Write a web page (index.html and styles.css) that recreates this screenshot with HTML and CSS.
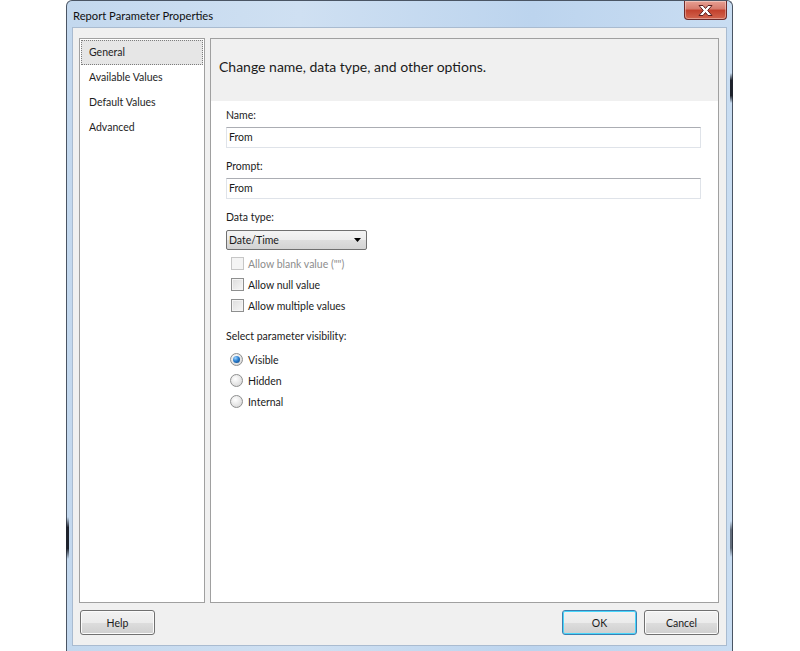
FILE: index.html
```html
<!DOCTYPE html>
<html lang="en">
<head>
<meta charset="utf-8">
<title>Report Parameter Properties</title>
<link rel="stylesheet" href="styles.css">
</head>
<body>
<div class="desk">
  <div class="window">
    <span class="edge edge-l1"></span>
    <span class="edge edge-r1"></span>
    <span class="edge edge-r2"></span>
    <div class="titlebar">
      <span class="title">Report Parameter Properties</span>
      <div class="close">
        <svg width="17" height="11" viewBox="0 0 17 11">
          <path d="M2 0.5 H6 L8.5 3.5 L11 0.5 H15 L10.7 5.5 L15 10.5 H11 L8.5 7.5 L6 10.5 H2 L6.3 5.5 Z" fill="#ffffff" stroke="#5b1f1f" stroke-width="1" stroke-linejoin="round"/>
        </svg>
      </div>
    </div>
    <div class="client">
      <div class="main">
        <ul class="nav">
          <li class="nav-item selected">General</li>
          <li class="nav-item">Available Values</li>
          <li class="nav-item">Default Values</li>
          <li class="nav-item">Advanced</li>
        </ul>
        <div class="page">
          <div class="page-head">Change name, data type, and other options.</div>
          <div class="page-body">
            <div class="lbl">Name:</div>
            <div class="input">From</div>
            <div class="lbl gap">Prompt:</div>
            <div class="input">From</div>
            <div class="lbl gap">Data type:</div>
            <div class="combo">
              <span>Date/Time</span>
              <svg class="arrow" width="7" height="4" viewBox="0 0 7 4"><path d="M0 0 H7 L3.5 4 Z" fill="#000"/></svg>
            </div>
            <div class="checks">
              <div class="check disabled"><span class="box"></span><span>Allow blank value ("")</span></div>
              <div class="check"><span class="box"></span><span>Allow null value</span></div>
              <div class="check"><span class="box"></span><span>Allow multiple values</span></div>
            </div>
            <div class="lbl vis">Select parameter visibility:</div>
            <div class="radios">
              <div class="radio"><span class="dot on"></span><span>Visible</span></div>
              <div class="radio"><span class="dot"></span><span>Hidden</span></div>
              <div class="radio"><span class="dot"></span><span>Internal</span></div>
            </div>
          </div>
        </div>
      </div>
      <div class="buttons">
        <button class="btn">Help</button>
        <div class="spacer"></div>
        <button class="btn default">OK</button>
        <button class="btn">Cancel</button>
      </div>
    </div>
  </div>
</div>
</body>
</html>
```

FILE: styles.css
```css
* { box-sizing: border-box; }
html, body {
  margin: 0;
  padding: 0;
  background: #ffffff;
  overflow: hidden;
}
body {
  font-family: "Lato", "Open Sans", "Noto Sans", sans-serif;
  font-size: 10.5px;
  color: #1b1b1b;
}
.desk {
  width: 800px;
  height: 651px;
  padding-left: 66px;
}
.window {
  position: relative;
  width: 667px;
  height: 651px;
  border: 1px solid #4a5564;
  border-bottom: none;
  border-radius: 6px 6px 0 0;
  background: linear-gradient(90deg, #c3d8ee 0%, #cfe0f2 35%, #bcd4ee 70%, #c9ddf2 100%);
  padding: 0 5px 5px 5px;
  display: flex;
  flex-direction: column;
}
.edge {
  position: absolute;
  width: 3px;
  background: linear-gradient(180deg, rgba(30,34,44,0) 0%, #1e222c 25%, #1e222c 75%, rgba(30,34,44,0) 100%);
}
.edge-l1 { left: -1px; top: 516px; height: 42px; }
.edge-r1 { right: -1px; top: 72px; height: 30px; }
.edge-r2 { right: -1px; top: 520px; height: 36px; opacity: 0.6; }
.titlebar {
  height: 26px;
  display: flex;
  justify-content: space-between;
  align-items: flex-start;
}
.title {
  font-size: 11.2px;
  color: #101010;
  padding-top: 7px;
  padding-left: 1px;
  line-height: 16px;
}
.close {
  width: 43px;
  height: 19px;
  border: 1px solid #6d2a2a;
  border-top: none;
  border-radius: 0 0 4px 4px;
  background: linear-gradient(180deg, #e8a093 0%, #d57a6c 45%, #c2402c 50%, #d2654f 100%);
  display: flex;
  align-items: center;
  justify-content: center;
  box-shadow: inset 0 0 0 1px rgba(255,255,255,0.35);
}
.client {
  flex: 1;
  border: 1px solid #a9bbd0;
  background: #f0f0f0;
  padding: 10px 7px 9px 6px;
  display: flex;
  flex-direction: column;
}
.main {
  height: 565px;
  display: flex;
  gap: 5px;
}
.nav {
  list-style: none;
  margin: 0;
  padding: 1px;
  width: 126px;
  background: #ffffff;
  border: 1px solid #a0a0a0;
}
.nav-item {
  height: 25px;
  line-height: 23px;
  padding-left: 7px;
  border: 1px solid transparent;
  color: #1e1e1e;
}
.nav-item.selected {
  background: #e6e6e6;
  border: 1px dotted #7c7c7c;
}
.page {
  flex: 1;
  background: #ffffff;
  border: 1px solid #a0a0a0;
  display: flex;
  flex-direction: column;
}
.page-head {
  height: 62px;
  background: #f0f0f0;
  font-size: 14px;
  line-height: 20px;
  padding: 18px 0 0 8px;
  color: #1b1b1b;
}
.page-body {
  padding: 6px 17px 0 15px;
}
.lbl {
  line-height: 16px;
  height: 16px;
}
.lbl.gap { margin-top: 10px; }
.input {
  margin-top: 4px;
  height: 21px;
  border: 1px solid #dfe3e9;
  border-top-color: #abadb3;
  line-height: 19px;
  padding-left: 2px;
  background: #fff;
}
.combo {
  margin-top: 5px;
  width: 141px;
  height: 20px;
  border: 1px solid #707070;
  border-radius: 2px;
  background: linear-gradient(180deg, #f4f4f4 0%, #ececec 50%, #dedede 51%, #d3d3d3 100%);
  display: flex;
  align-items: center;
  justify-content: space-between;
  padding: 0 5px 0 2px;
  line-height: 18px;
}
.arrow { display: block; }
.checks {
  margin-top: 3px;
  padding-left: 5px;
}
.check, .radio {
  height: 21px;
  display: flex;
  align-items: center;
  gap: 4px;
}
.box {
  width: 13px;
  height: 13px;
  border: 1px solid #8e8f8f;
  background: linear-gradient(135deg, #dcdcdc 0%, #f7f7f7 100%);
  box-shadow: inset 0 0 0 1px #f4f4f4;
  flex: none;
}
.check.disabled { color: #8d8d8d; }
.check.disabled .box {
  border-color: #c6c6c6;
  background: #f4f4f4;
}
.lbl.vis { margin-top: 12px; }
.radios {
  margin-top: 5px;
  padding-left: 4px;
}
.radio { gap: 5px; }
.dot {
  width: 13px;
  height: 13px;
  border-radius: 50%;
  border: 1px solid #8e8f8f;
  background: radial-gradient(circle at 40% 35%, #ffffff 0%, #e8e8e8 50%, #cfcfcf 100%);
  flex: none;
  display: flex;
  align-items: center;
  justify-content: center;
}
.dot.on::after {
  content: "";
  width: 7px;
  height: 7px;
  border-radius: 50%;
  background: radial-gradient(circle at 35% 30%, #9fd4ff 0%, #2a7fd0 45%, #0b3d78 100%);
}
.buttons {
  margin-top: 7px;
  display: flex;
  gap: 7px;
  padding-left: 1px;
}
.spacer { flex: 1; }
.btn {
  width: 75px;
  height: 25px;
  font-family: inherit;
  font-size: 10.5px;
  color: #1b1b1b;
  border: 1px solid #707070;
  border-radius: 3px;
  background: linear-gradient(180deg, #f2f2f2 0%, #ebebeb 50%, #dddddd 51%, #cfcfcf 100%);
  box-shadow: inset 0 0 0 1px #fbfbfb;
  padding: 0;
}
.btn.default {
  border-color: #3c7fb1;
  box-shadow: inset 0 0 0 1px #48d6fb;
}
```
